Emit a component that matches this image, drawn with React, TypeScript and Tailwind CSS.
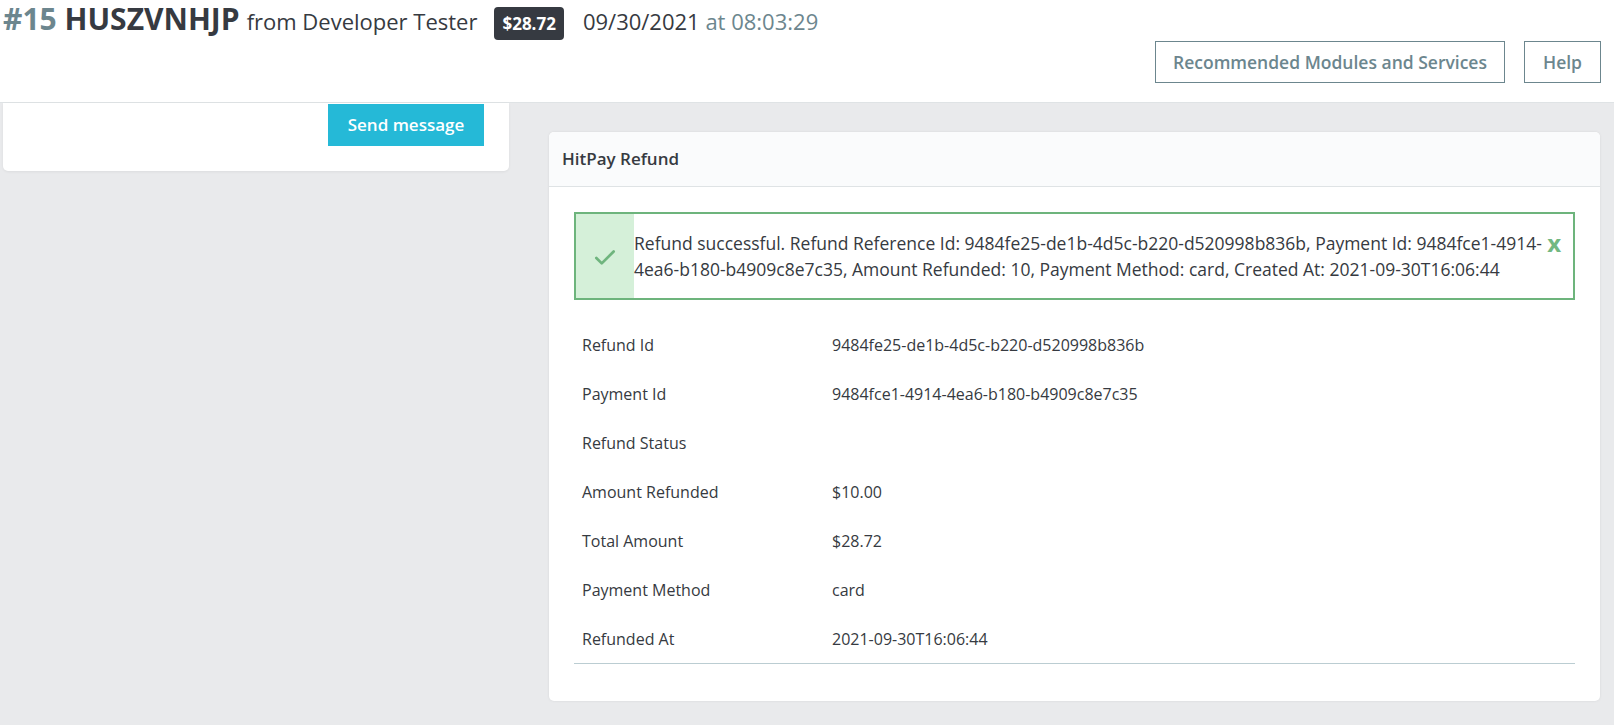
import { Check } from "lucide-react";

const rows = [
  { label: "Refund Id", value: "9484fe25-de1b-4d5c-b220-d520998b836b" },
  { label: "Payment Id", value: "9484fce1-4914-4ea6-b180-b4909c8e7c35" },
  { label: "Refund Status", value: "" },
  { label: "Amount Refunded", value: "$10.00" },
  { label: "Total Amount", value: "$28.72" },
  { label: "Payment Method", value: "card" },
  { label: "Refunded At", value: "2021-09-30T16:06:44" },
];

export default function App() {
  return (
    <div className="min-h-screen bg-[#e9eaec] font-['Open_Sans',sans-serif] text-[#363a41]">
      {/* ─── Toolbar ─── */}
      <header className="h-[103px] bg-white border-b border-[#dfe3e5] flex flex-col justify-between pb-[19px]">
        <div className="flex items-baseline pt-[4px] pl-[3px] leading-none">
          <h2 className="text-[30px] font-bold leading-none">
            <span className="text-[#6c868e]">#15</span> HUSZVNHJP
          </h2>
          <span className="ml-[7px] text-[22px] leading-none">from Developer Tester</span>
          <span className="ml-[17px] inline-flex rounded-[4px] bg-[#363a41] px-[8px] py-[8px] text-[17px] font-bold leading-none text-white">
            $28.72
          </span>
          <span className="ml-[19px] text-[22px] leading-none">
            09/30/2021 <span className="text-[#6c868e]">at 08:03:29</span>
          </span>
        </div>
        <div className="flex justify-end gap-[19px] pr-[13px]">
          <button className="h-[42px] border border-[#6c868e] px-[17px] text-[17.5px] font-semibold text-[#6c868e]">
            Recommended Modules and Services
          </button>
          <button className="h-[42px] border border-[#6c868e] px-[18px] text-[17.5px] font-semibold text-[#6c868e]">
            Help
          </button>
        </div>
      </header>

      <div className="flex items-start">
        {/* ─── Messages card (tail) ─── */}
        <div className="ml-[3px] w-[506px] rounded-b-[5px] bg-white pt-[1px] pb-[25px] pr-[25px] flex justify-end shadow-[0_1px_3px_rgba(0,0,0,0.06)]">
          <button className="h-[42px] w-[156px] bg-[#25b9d7] text-[17px] font-semibold text-white">
            Send message
          </button>
        </div>

        {/* ─── HitPay Refund ─── */}
        <div className="ml-[40px] mt-[29px] w-[1051px] rounded-[5px] bg-white shadow-[0_0_3px_rgba(0,0,0,0.08)]">
          <div className="h-[55px] rounded-t-[5px] border-b border-[#dfe3e5] bg-[#fafbfc] pl-[13px] flex items-center">
            <h3 className="text-[17px] font-semibold">HitPay Refund</h3>
          </div>

          <div className="px-[25px] pt-[25px] pb-[37px]">
            <div className="mb-[20px] flex h-[88px] border-2 border-[#6db47c]">
              <div className="w-[58px] shrink-0 bg-[#d5f0d9] flex items-center justify-center pt-[4px]">
                <Check size={26} strokeWidth={2.5} className="text-[#6fb57e]" />
              </div>
              <div className="flex-1 min-w-0 pt-[16px] text-[17.5px] leading-[26px] whitespace-nowrap">
                Refund successful. Refund Reference Id: 9484fe25-de1b-4d5c-b220-d520998b836b, Payment Id: 9484fce1-4914-
                <br />
                4ea6-b180-b4909c8e7c35, Amount Refunded: 10, Payment Method: card, Created At: 2021-09-30T16:06:44
              </div>
              <span className="mt-[17px] pr-[12px] text-[24px] font-bold leading-none text-[#72b882]">x</span>
            </div>

            <div className="border-b border-[#bbcdd2]">
              {rows.map((row) => (
                <div key={row.label} className="flex h-[49px] items-center text-[16px]">
                  <div className="w-[250px] pl-[8px]">{row.label}</div>
                  <div className="pl-[8px]">{row.value}</div>
                </div>
              ))}
            </div>
          </div>
        </div>
      </div>
    </div>
  );
}
